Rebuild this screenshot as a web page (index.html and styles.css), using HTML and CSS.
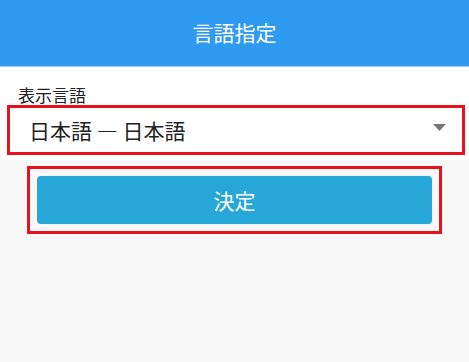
FILE: index.html
```html
<!DOCTYPE html>
<html lang="ja">
<head>
<meta charset="utf-8">
<link rel="stylesheet" href="styles.css">
</head>
<body>
<header class="topbar"><h1 class="title">言語指定</h1></header>
<section class="panel">
  <div class="label">表示言語</div>
  <div class="select">
    <span class="select-text">日本語 — 日本語</span>
    <svg class="caret" width="13" height="7" viewBox="0 0 13 7"><path d="M0 0h13L6.5 7z" fill="#777"/></svg>
  </div>
</section>
<div class="btn-wrap">
  <button class="btn">決定</button>
</div>
</body>
</html>
```
FILE: styles.css
```css
html, body {
  margin: 0;
  padding: 0;
  background: #f8f8f8;
  font-family: "Noto Sans CJK JP", "Noto Sans", sans-serif;
  color: #222;
}
.topbar {
  height: 66px;
  background: #2f9bf0;
  border-bottom: 1px solid #9ccaf3;
  display: flex;
  align-items: center;
  justify-content: center;
}
.title {
  margin: 0;
  font-size: 21px;
  font-weight: 400;
  line-height: 1;
  color: #fff;
  margin-top: -2px;
}
.panel {
  background: #fff;
  padding: 17px 4px 5px 7px;
}
.label {
  font-size: 17px;
  line-height: 21px;
  padding-left: 11px;
}
.select {
  height: 44px;
  border: 3px solid #e8121e;
  display: flex;
  align-items: center;
  justify-content: space-between;
  padding: 0 16px 0 19px;
  background: #fff;
}
.select-text {
  font-size: 21px;
  line-height: 1;
}
.caret {
  display: block;
  margin-top: -6px;
}
.btn-wrap {
  margin: 6px 27px 0;
  border: 3px solid #e8121e;
  padding: 7px;
}
.btn {
  display: flex;
  align-items: center;
  justify-content: center;
  width: 100%;
  height: 48px;
  border: none;
  border-radius: 4px;
  background: #27a7d8;
  color: #fff;
  font-family: "Noto Sans CJK JP", "Noto Sans", sans-serif;
  font-size: 21px;
  padding: 0;
}
```
